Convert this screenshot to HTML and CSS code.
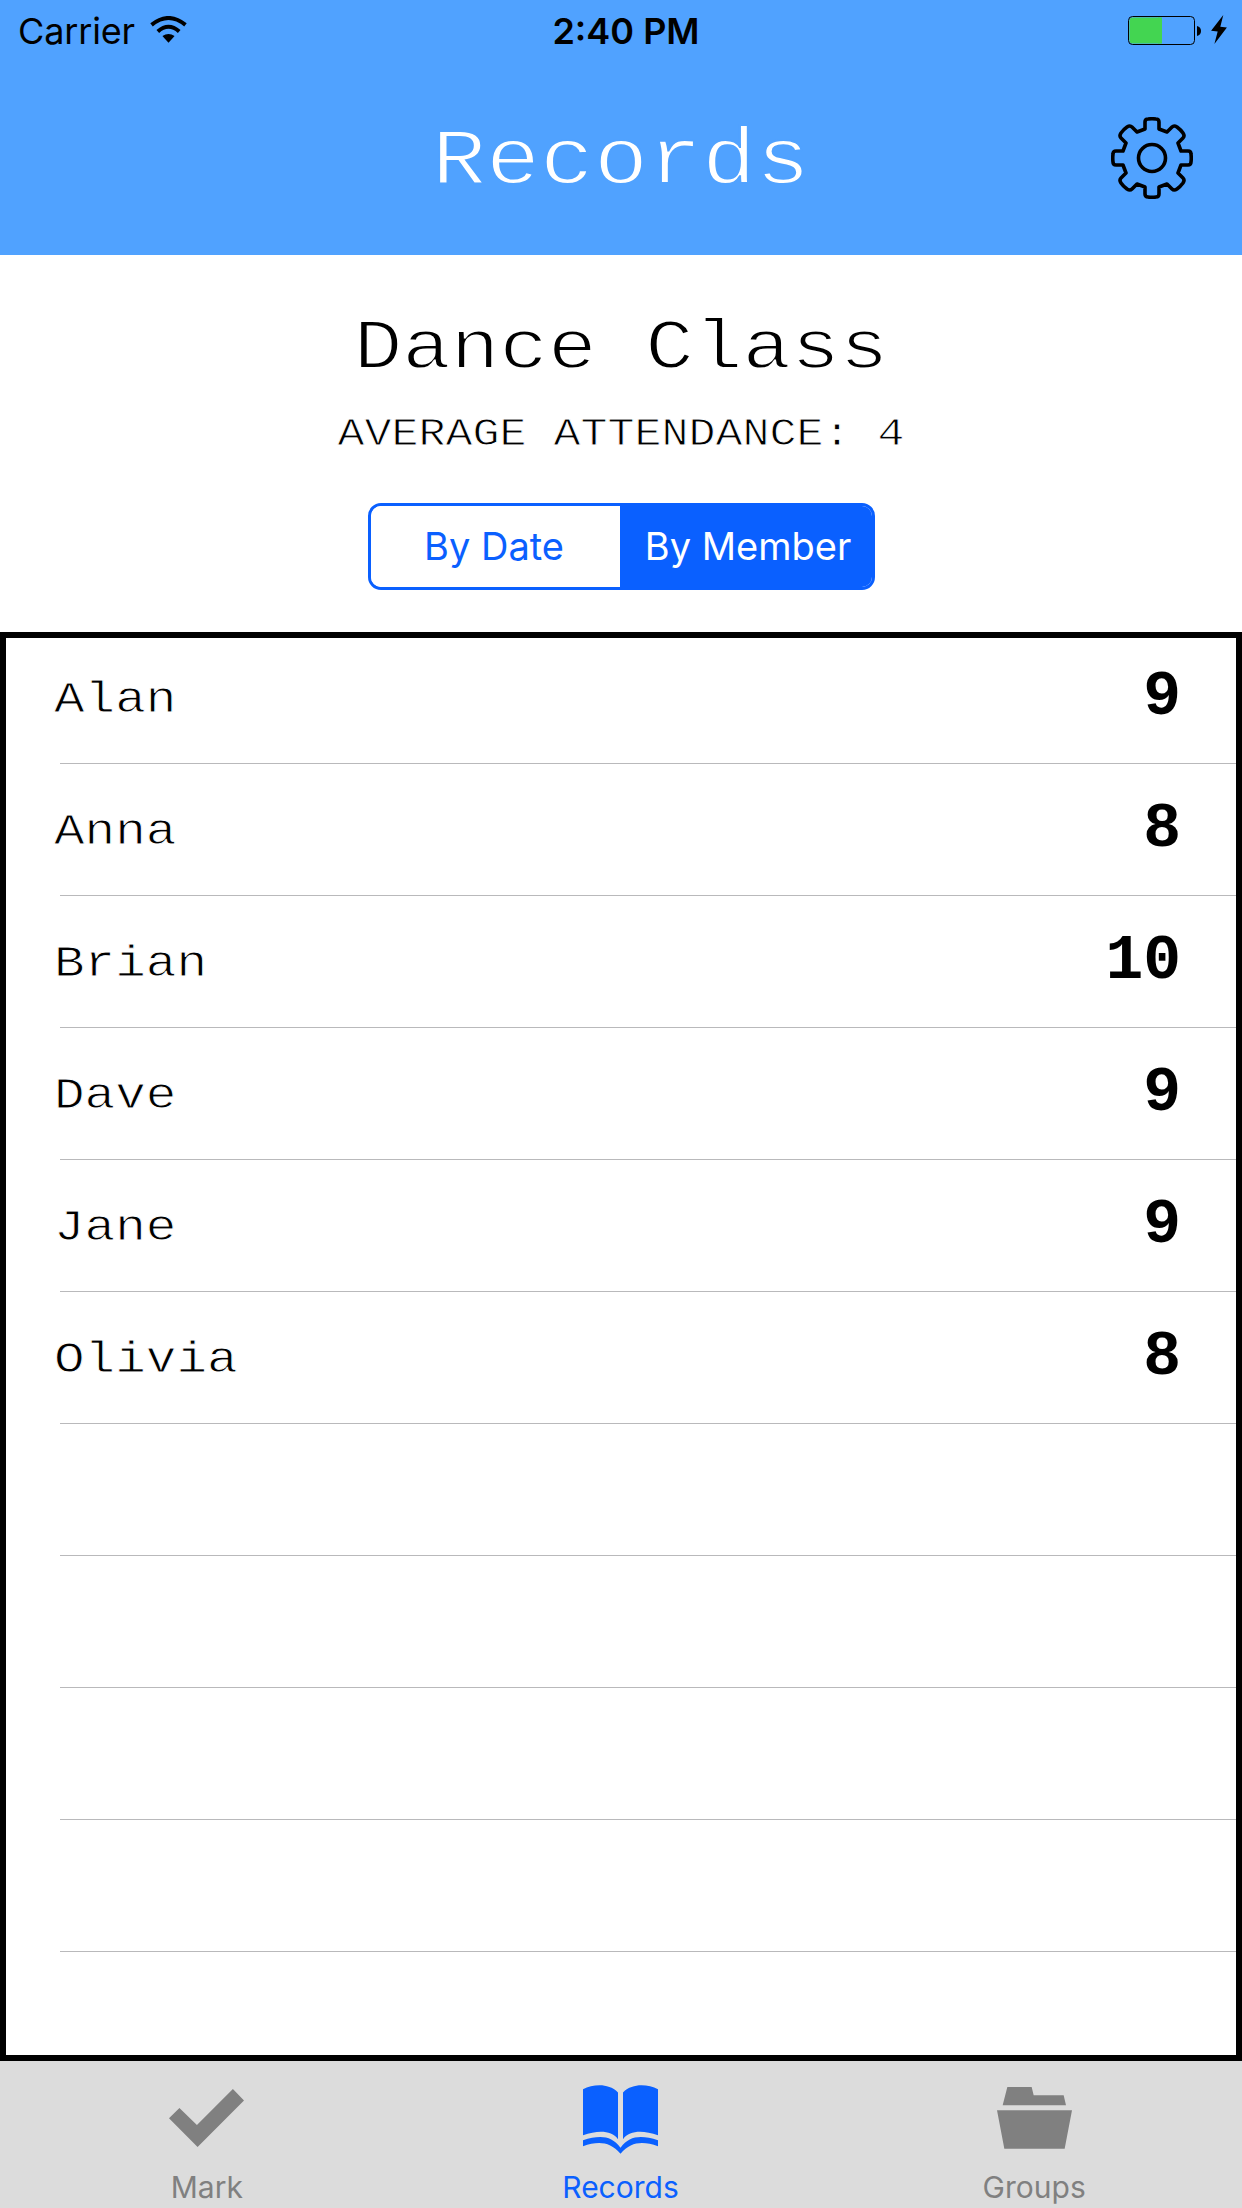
FILE: index.html
```html
<!DOCTYPE html>
<html lang="en">
<head>
<meta charset="utf-8">
<title>Records</title>
<link rel="stylesheet" href="styles.css">
</head>
<body>
<header class="header">
  <div class="status">
    <div class="status-left">
      <span class="carrier">Carrier</span>
      <svg class="wifi" viewBox="0 0 111 82"><g fill="none" stroke="#000" stroke-width="12"><path d="M4 27Q55.500 -15 107 27"/><path d="M23 47Q55.500 18 88 47"/></g><path d="M37 61Q55.500 48 74 61L55.500 81Z"/></svg>
    </div>
    <span class="time">2:40 PM</span>
    <div class="status-right">
      <svg class="battery" viewBox="0 0 73 29"><rect x="1.500" y="1.500" width="32.500" height="26" rx="3" fill="#43d551"/><rect x="30" y="1.500" width="4" height="26" fill="#43d551"/><rect x=".5" y=".5" width="66" height="28" rx="4" fill="none" stroke="#000"/><path d="M69 10Q73 11 73 15T69 20Z"/></svg>
      <svg class="bolt" viewBox="0 0 48 88"><path d="M37 0L0 48L20 50L10 88L48 38L28 36Z"/></svg>
    </div>
  </div>
  <div class="nav">
    <span></span>
    <h1 class="title">Records</h1>
    <svg class="gear" viewBox="-41 -41 82 82" fill="none" stroke="#000" stroke-width="3.600" stroke-linejoin="round"><path d="M-7-29V-36Q-7-39-4-39Q0-39.500 4-39Q7-39 7-36V-29L15-26L20-31Q22-33 25-31Q29-28 31-25Q33-22 31-20L26-15L29-7H36Q39-7 39-4Q39.500 0 39 4Q39 7 36 7H29L26 15L31 20Q33 22 31 25Q28 29 25 31Q22 33 20 31L15 26L7 29V36Q7 39 4 39Q0 39.500-4 39Q-7 39-7 36V29L-15 26L-20 31Q-22 33-25 31Q-29 28-31 25Q-33 22-31 20L-26 15L-29 7H-36Q-39 7-39 4Q-39.500 0-39-4Q-39-7-36-7H-29L-26-15L-31-20Q-33-22-31-25Q-28-29-25-31Q-22-33-20-31L-15-26Z"/><circle r="13.500"/></svg>
  </div>
</header>
<section class="summary">
  <h2 class="group">Dance Class</h2>
  <p class="average">AVERAGE ATTENDANCE: 4</p>
  <div class="segments">
    <button class="segment">By Date</button>
    <button class="segment active">By Member</button>
  </div>
</section>
<main class="records">
  <div class="row"><span class="name">Alan</span><b class="count">9</b></div>
  <div class="row"><span class="name">Anna</span><b class="count">8</b></div>
  <div class="row"><span class="name">Brian</span><b class="count">10</b></div>
  <div class="row"><span class="name">Dave</span><b class="count">9</b></div>
  <div class="row"><span class="name">Jane</span><b class="count">9</b></div>
  <div class="row"><span class="name">Olivia</span><b class="count">8</b></div>
  <div class="row"></div>
  <div class="row"></div>
  <div class="row"></div>
  <div class="row"></div>
</main>
<nav class="tabs">
  <a class="tab"><span class="tab-icon check"><svg width="75" height="58" viewBox="0 0 223 172"><path d="M31 56L83 107L190 0L223 34L85 172L0 87Z"/></svg></span><span class="tab-label">Mark</span></a>
  <a class="tab selected"><span class="tab-icon book"><svg width="75" height="69" viewBox="0 0 225 206"><path d="M0 12C30-2 75-8 105 22V162C85 135 45 135 0 150ZM225 12C195-2 150-8 120 22V162C140 135 180 135 225 150ZM0 165C50 150 85 150 112.500 188C140 150 175 150 225 165V183C180 168 145 168 112.500 206C80 168 45 168 0 183Z"/></svg></span><span class="tab-label">Records</span></a>
  <a class="tab"><span class="tab-icon folder"><svg width="75" height="62" viewBox="0 0 225 186"><path d="M31 0H104L110 25H200L207 55H17ZM0 70H225L203 185H22Z"/></svg></span><span class="tab-label">Groups</span></a>
</nav>
</body>
</html>
```
FILE: styles.css
```css
* { box-sizing: border-box; }
body {
  margin: 0;
  width: 1242px;
  height: 2208px;
  display: flex;
  flex-direction: column;
  background: #fff;
  color: #000;
  font-family: Inter, "Liberation Sans", sans-serif;
}
svg { display: block; }

.header { height: 255px; background: #50a2ff; }
.status {
  height: 62px;
  padding: 0 15px 0 18px;
  display: grid;
  grid-template-columns: 1fr auto 1fr;
  font-size: 36px;
  line-height: 62px;
}
.status-left, .status-right { display: flex; align-items: flex-start; }
.status-right { justify-content: flex-end; gap: 10px; }
.carrier { letter-spacing: -.15px; }
.wifi { width: 37px; height: 27px; margin: 16px 0 0 15px; }
.battery { width: 73px; height: 29px; margin-top: 16px; }
.bolt { width: 16px; height: 29px; margin-top: 15px; }
.time { font-weight: 600; margin-left: 7px; }
.nav {
  height: 193px;
  padding: 0 49px;
  display: grid;
  grid-template-columns: 1fr auto 1fr;
}

/* Wide typewriter lettering: flattened about the baseline */
.title, .group, .average, .name, .count { font-family: "Liberation Mono", monospace; }
.title, .group, .average, .name { transform: scaleY(.88); }
.title {
  margin: 0;
  font-size: 90px;
  font-weight: 400;
  line-height: 192px;
  color: #fff;
  -webkit-text-stroke: 2px #50a2ff;
  transform-origin: 0 128px;
}
.gear { width: 82px; height: 82px; justify-self: end; margin-top: 55px; }

.summary {
  height: 377px;
  padding-top: 41px;
  display: flex;
  flex-direction: column;
  align-items: center;
}
.group {
  margin: 0;
  font-size: 81px;
  font-weight: 400;
  line-height: 100px;
  -webkit-text-stroke: 2px #fff;
  transform-origin: 0 80px;
}
.average {
  margin: 7px 0 40px;
  font-size: 45px;
  line-height: 60px;
  -webkit-text-stroke: 1px #fff;
  transform-origin: 0 46px;
}
.segments {
  width: 507px;
  height: 87px;
  display: flex;
  border: 3px solid #0a60ff;
  border-radius: 13px;
  overflow: hidden;
}
.segment {
  width: 249px;
  padding: 0 2px 0 0;
  border: 0;
  background: #fff;
  color: #0a60ff;
  font: 38px/81px Inter, sans-serif;
}
.segment.active { width: 252px; padding: 0 0 0 5px; background: #0a60ff; color: #fff; }

.records {
  height: 1429px;
  padding: 0 6px;
  box-shadow: inset 0 0 0 6px #000;
}
.row {
  height: 132px;
  margin-left: 54px;
  padding-right: 55px;
  display: flex;
  justify-content: space-between;
  border-bottom: 1px solid #b9b9bb;
  line-height: 131px;
}
.name {
  margin-left: -6px;
  font-size: 51px;
  -webkit-text-stroke: 1px #fff;
  transform-origin: 0 85px;
}
.count { font-size: 63px; }

.tabs { height: 147px; padding-right: 1px; display: flex; background: #dcdcdc; }
.tab {
  flex: 1;
  display: flex;
  flex-direction: column;
  align-items: center;
  color: #808080;
  fill: currentColor;
}
.tab.selected { color: #0a60ff; }
.tab-icon { height: 108px; }
.check { padding-top: 28px; }
.book { padding-top: 24px; }
.folder { padding-top: 26px; }
.tab-label { font-size: 30px; line-height: 36px; }
```
